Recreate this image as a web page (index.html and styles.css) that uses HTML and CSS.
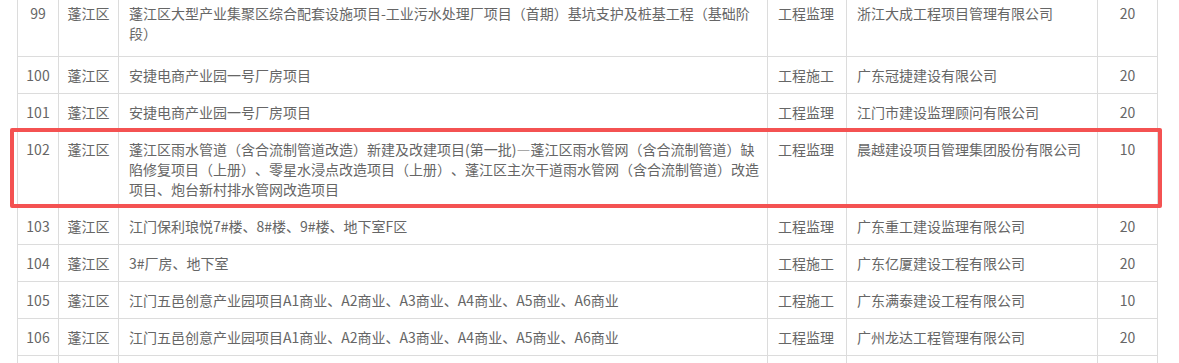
FILE: index.html
```html
<!DOCTYPE html>
<html lang="zh-CN">
<head>
<meta charset="utf-8">
<title>项目列表</title>
<link rel="stylesheet" href="styles.css">
</head>
<body>
<div class="wrap">
  <table class="list">
    <colgroup>
      <col class="c-no">
      <col class="c-area">
      <col class="c-name">
      <col class="c-type">
      <col class="c-corp">
      <col class="c-score">
    </colgroup>
    <tbody>
      <tr class="first">
        <td class="num">99</td><td class="area">蓬江区</td>
        <td class="name">蓬江区大型产业集聚区综合配套设施项目-工业污水处理厂项目（首期）基坑支护及桩基工程（基础阶段）</td>
        <td>工程监理</td><td>浙江大成工程项目管理有限公司</td><td class="num">20</td>
      </tr>
      <tr>
        <td class="num">100</td><td class="area">蓬江区</td><td class="name">安捷电商产业园一号厂房项目</td>
        <td>工程施工</td><td>广东冠捷建设有限公司</td><td class="num">20</td>
      </tr>
      <tr>
        <td class="num">101</td><td class="area">蓬江区</td><td class="name">安捷电商产业园一号厂房项目</td>
        <td>工程监理</td><td>江门市建设监理顾问有限公司</td><td class="num">20</td>
      </tr>
      <tr>
        <td class="num">102</td><td class="area">蓬江区</td>
        <td class="name">蓬江区雨水管道（含合流制管道改造）新建及改建项目(第一批)—蓬江区雨水管网（含合流制管道）缺陷修复项目（上册）、零星水浸点改造项目（上册）、蓬江区主次干道雨水管网（含合流制管道）改造项目、炮台新村排水管网改造项目</td>
        <td>工程监理</td><td>晨越建设项目管理集团股份有限公司</td><td class="num">10</td>
      </tr>
      <tr>
        <td class="num">103</td><td class="area">蓬江区</td><td class="name">江门保利琅悦7#楼、8#楼、9#楼、地下室F区</td>
        <td>工程监理</td><td>广东重工建设监理有限公司</td><td class="num">20</td>
      </tr>
      <tr>
        <td class="num">104</td><td class="area">蓬江区</td><td class="name">3#厂房、地下室</td>
        <td>工程施工</td><td>广东亿厦建设工程有限公司</td><td class="num">20</td>
      </tr>
      <tr>
        <td class="num">105</td><td class="area">蓬江区</td><td class="name">江门五邑创意产业园项目A1商业、A2商业、A3商业、A4商业、A5商业、A6商业</td>
        <td>工程施工</td><td>广东满泰建设工程有限公司</td><td class="num">10</td>
      </tr>
      <tr>
        <td class="num">106</td><td class="area">蓬江区</td><td class="name">江门五邑创意产业园项目A1商业、A2商业、A3商业、A4商业、A5商业、A6商业</td>
        <td>工程监理</td><td>广州龙达工程管理有限公司</td><td class="num">20</td>
      </tr>
      <tr class="tail">
        <td class="num"></td><td class="area"></td><td class="name"></td>
        <td></td><td></td><td class="num"></td>
      </tr>
    </tbody>
  </table>
  <div class="mark"></div>
</div>
</body>
</html>
```

FILE: styles.css
```css
html, body {
  margin: 0;
  padding: 0;
  background: #fff;
}

body {
  font-family: "Noto Sans CJK SC", "Noto Sans", sans-serif;
  font-size: 14px;
  color: #666;
  overflow: hidden;
  text-spacing-trim: space-all;
}

.wrap {
  position: relative;
  width: 1140px;
  margin: -6px 0 0 17px;
}

.list {
  width: 1140px;
  table-layout: fixed;
  border-collapse: collapse;
}

.c-no { width: 41px; }
.c-area { width: 60px; }
.c-name { width: 649px; }
.c-type { width: 79px; }
.c-corp { width: 251px; }
.c-score { width: 60px; }

.list td {
  border: 1px solid #dcdcdc;
  padding: 8px 10px;
  line-height: 20px;
  vertical-align: top;
  text-align: left;
  white-space: normal;
}

.list td.name {
  padding-right: 5px;
}

.list td.num,
.list td.area {
  padding-left: 2px;
  padding-right: 2px;
  text-align: center;
  white-space: nowrap;
}

.list tr.first td {
  padding-bottom: 13px;
}

.list tr.tail td {
  height: 20px;
}

.mark {
  position: absolute;
  left: -7px;
  top: 134px;
  width: 1144px;
  height: 72px;
  border: 4px solid #f45252;
  border-radius: 2px;
  pointer-events: none;
}
```
